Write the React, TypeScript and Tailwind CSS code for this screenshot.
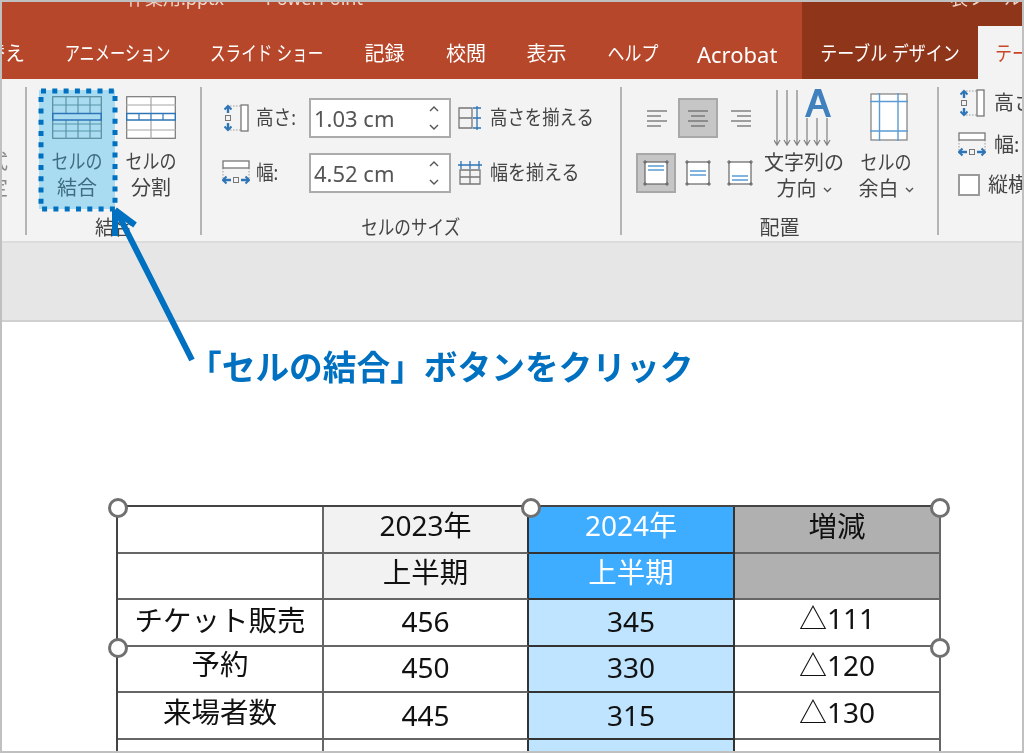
import type { ReactNode } from "react"

const jp = "font-['Noto_Sans','Noto_Sans_CJK_JP',sans-serif]"

const tabs = [
  { label: "アニメーション", w: "w-[145px]", squeeze: "scale-x-[0.76]" },
  { label: "スライド ショー", w: "w-[153px]", squeeze: "scale-x-[0.78]" },
  { label: "記録", w: "w-[83px]", squeeze: "" },
  { label: "校閲", w: "w-[80px]", squeeze: "" },
  { label: "表示", w: "w-[81px]", squeeze: "" },
  { label: "ヘルプ", w: "w-[91px]", squeeze: "scale-x-[0.85]" },
]

function HeightIcon() {
  return (
    <svg width="28" height="28" viewBox="0 0 28 28" fill="none">
      <path d="M8 2h12M8 26h12" stroke="#999" strokeDasharray="1.5 1.5" />
      <rect x="19" y="1" width="7" height="26" fill="#fff" stroke="#777" strokeWidth="1.3" />
      <path d="M6 2v7M6 19v7" stroke="#2e75b6" strokeWidth="2.4" />
      <path d="M2.5 5.5L6 2l3.5 3.5M2.5 22.5L6 26l3.5-3.5" stroke="#2e75b6" strokeWidth="2" />
      <rect x="3.5" y="11.5" width="5" height="5" stroke="#777" />
    </svg>
  )
}

function WidthIcon() {
  return (
    <svg width="28" height="28" viewBox="0 0 28 28" fill="none">
      <path d="M1 9v15M27 9v15" stroke="#999" strokeDasharray="1.5 1.5" />
      <rect x="1" y="2" width="26" height="7" fill="#fff" stroke="#777" strokeWidth="1.3" />
      <path d="M1 21h8M19 21h8" stroke="#2e75b6" strokeWidth="2.4" />
      <path d="M4.5 17.5L1 21l3.5 3.5M23.5 17.5L27 21l-3.5 3.5" stroke="#2e75b6" strokeWidth="2" />
      <rect x="11.5" y="18.5" width="5" height="5" stroke="#777" />
    </svg>
  )
}

function MergeIcon() {
  return (
    <svg width="50" height="43" viewBox="0 0 50 43" fill="none" stroke="#5b95a8" strokeWidth="1.2">
      <rect x="0.7" y="0.7" width="48.6" height="41.6" stroke="#5a8a9c" />
      <path d="M0 9h50M0 28h50M0 35h50M14 0v17M26 0v17M38 0v17M14 24v19M26 24v19M38 24v19" />
      <rect x="0.7" y="17.5" width="48.6" height="6.5" stroke="#2e75b6" strokeWidth="1.5" />
    </svg>
  )
}

function SplitIcon() {
  return (
    <svg width="50" height="43" viewBox="0 0 50 43" fill="#fff" stroke="#a6a6a6" strokeWidth="1.2">
      <rect x="0.7" y="0.7" width="48.6" height="41.6" stroke="#777" />
      <path d="M25 0v17M25 24v19M0 9h50M0 34h50" />
      <rect x="0.7" y="17.5" width="48.6" height="6.5" stroke="#2e75b6" strokeWidth="1.5" />
      <path d="M13 17.5v6.5M25 17.5v6.5M37 17.5v6.5" stroke="#2e75b6" />
    </svg>
  )
}

function EqualHeightIcon() {
  return (
    <svg width="24" height="24" viewBox="0 0 24 24" fill="none">
      <path d="M1 2h13v20H1zM1 12h13" stroke="#777" strokeWidth="1.3" />
      <path d="M19 0v24M15 2h8M15 12h8M15 22h8" stroke="#2e75b6" strokeWidth="1.3" />
    </svg>
  )
}

function EqualWidthIcon() {
  return (
    <svg width="24" height="24" viewBox="0 0 24 24" fill="none">
      <path d="M2 9h20v14H2zM12 9v14M2 16h20" stroke="#777" strokeWidth="1.3" />
      <path d="M0 4h24M3 0v8M12 0v8M21 0v8" stroke="#2e75b6" strokeWidth="1.3" />
    </svg>
  )
}

function AlignLines({ align }: { align: "left" | "center" | "right" }) {
  const rows =
    align === "left"
      ? ["M0 1h20", "M0 6h14", "M0 11h20", "M0 16h14"]
      : align === "center"
        ? ["M0 1h20", "M3 6h14", "M0 11h20", "M3 16h14"]
        : ["M0 1h20", "M6 6h14", "M0 11h20", "M6 16h14"]
  return (
    <svg width="20" height="17" viewBox="0 0 20 17" fill="none" stroke="#666" strokeWidth="1.2">
      {rows.map((d) => (
        <path key={d} d={d} />
      ))}
    </svg>
  )
}

function VAlignIcon({ y }: { y: number }) {
  return (
    <svg width="26" height="26" viewBox="0 0 26 26" fill="none">
      <rect x="2" y="2" width="22" height="22" fill="#fff" stroke="#666" strokeWidth="1.2" />
      <path d="M0 2h4M22 2h4M0 24h4M22 24h4M2 0v4M24 0v4M2 22v4M24 22v4" stroke="#666" />
      <path d={`M5 ${y}h16M5 ${y + 4}h16`} stroke="#5b9bd5" strokeWidth="1.6" />
    </svg>
  )
}

function DirectionIcon() {
  return (
    <svg width="60" height="60" viewBox="0 0 60 60" fill="none">
      <path
        d="M3 3v55M13 3v55M23 3v55M33 31v27M43 31v27M53 31v27M0 53l3 5 3-5M10 53l3 5 3-5M20 53l3 5 3-5M30 53l3 5 3-5M40 53l3 5 3-5M50 53l3 5 3-5"
        stroke="#808080"
        strokeWidth="1.2"
      />
      <path d="M31 30L41 2h6l10 28h-5l-3-8H39l-3 8zM41 18h6.500L44 8z" fill="#3f80bd" fillRule="evenodd" />
    </svg>
  )
}

function MarginIcon() {
  return (
    <svg width="38" height="48" viewBox="0 0 38 48" fill="#fff">
      <rect x="1" y="1" width="36" height="46" stroke="#888" strokeWidth="1.3" />
      <path d="M9.500 0v48M28 0v48M0 8.500h38M0 38h38" stroke="#5b9bd5" strokeWidth="1.4" fill="none" />
    </svg>
  )
}

function Spinner() {
  return (
    <svg width="10" height="26" viewBox="0 0 10 26" fill="none" stroke="#555" strokeWidth="1.4">
      <path d="M1 6l4-4 4 4M1 20l4 4 4-4" />
    </svg>
  )
}

function Chevron() {
  return (
    <svg width="9" height="6" viewBox="0 0 9 6" fill="none" stroke="#555" strokeWidth="1.4" className="inline-block ml-1.5 mb-0.5">
      <path d="M1 1l3.500 3.500L8 1" />
    </svg>
  )
}

function ButtonLabel({ first, second }: { first: ReactNode; second: ReactNode }) {
  return (
    <div className="mt-[3px] text-[20px] leading-[26px] text-center whitespace-nowrap">
      <div>{first}</div>
      <div>{second}</div>
    </div>
  )
}

function SizeRow({ icon, label, value, icon2, label2, squeeze }: { icon: ReactNode; label: string; value: string; icon2: ReactNode; label2: string; squeeze: string }) {
  return (
    <div className="flex items-center h-10">
      <div className="w-[28px] flex justify-center">{icon}</div>
      <span className="w-[59px] pl-[6px] text-[20px] whitespace-nowrap">
        <span className="inline-block origin-left scale-x-[0.88]">{label}</span>
      </span>
      <div className="w-[142px] h-10 bg-white border-2 border-[#ababab] flex items-center justify-between pl-[3px] pr-[10px]">
        <span className="text-[22px] text-[#555]">{value}</span>
        <Spinner />
      </div>
      <div className="ml-[7px] w-[24px]">{icon2}</div>
      <span className="ml-2 text-[20px] whitespace-nowrap">
        <span className={`inline-block origin-left ${squeeze}`}>{label2}</span>
      </span>
    </div>
  )
}

function Group({ className, label, children }: { className: string; label: ReactNode; children: ReactNode }) {
  return (
    <div className={`${className} shrink-0 h-[148px] border-r-2 border-[#b4b4b4] flex flex-col`}>
      <div className="flex-1 min-h-0">{children}</div>
      <div className="text-center text-[20px] leading-[16px] h-[15px] whitespace-nowrap">{label}</div>
    </div>
  )
}

type Cell = { text?: string; bg?: string; color?: string; size?: string; shift?: string }

const gray = "bg-[#f2f2f2]"
const blue = "bg-[#3fadff]"
const pale = "bg-[#bfe4ff]"
const dark = "bg-[#b0b0b0]"
const cjk = "text-[28.5px]"
const num = "text-[28px]"

const rows: Cell[][] = [
  [{}, { text: "2023年", bg: gray, size: num, shift: "pb-[8px]" }, { text: "2024年", bg: blue, color: "text-white", size: num, shift: "pb-[8px]" }, { text: "増減", bg: dark, size: cjk, shift: "pb-[5px]" }],
  [{}, { text: "上半期", bg: gray, size: cjk, shift: "pb-[7px]" }, { text: "上半期", bg: blue, color: "text-white", size: cjk, shift: "pb-[7px]" }, { bg: dark }],
  [
    { text: "チケット販売", size: cjk, shift: "pb-[4px]" },
    { text: "456", size: num, shift: "pb-[2px]" },
    { text: "345", bg: pale, size: num, shift: "pb-[2px]" },
    { text: "△111", size: num, shift: "pb-[8px]" },
  ],
  [
    { text: "予約", size: cjk, shift: "pb-[10px]" },
    { text: "450", size: num, shift: "pb-[4px]" },
    { text: "330", bg: pale, size: num, shift: "pb-[4px]" },
    { text: "△120", size: num, shift: "pb-[8px]" },
  ],
  [
    { text: "来場者数", size: cjk, shift: "pb-[6px]" },
    { text: "445", size: num, shift: "pb-[2px]" },
    { text: "315", bg: pale, size: num, shift: "pb-[2px]" },
    { text: "△130", size: num, shift: "pb-[8px]" },
  ],
  [{}, {}, { bg: pale }, {}],
]

function Handle({ className }: { className: string }) {
  return <div className={`absolute w-[20px] h-[20px] rounded-full bg-white border-[3px] border-[#707070] ${className}`} />
}

export default function App() {
  return (
    <div className={`${jp} relative w-[1024px] h-[753px] overflow-hidden bg-white text-[#444] blur-[0.35px]`}>
      {/* title bar + tabs */}
      <div className="bg-[#b7472a] h-[79px] flex flex-col text-white">
        <div className="h-[26px] flex">
          <div className="w-[802px] shrink-0 pl-[127px] -mt-[14px] text-[18px] leading-[24px] text-[#f0d5cc] whitespace-nowrap">
            作業用.pptx　-　PowerPoint
          </div>
          <div className="flex-1 bg-[#8f3519] pl-[148px] -mt-[14px] text-[18px] leading-[24px] text-[#f0d5cc] whitespace-nowrap">
            表ツール
          </div>
        </div>
        <div className="flex-1 flex text-[20px]">
          <div className="w-[45px] shrink-0 pt-[13px] overflow-hidden whitespace-nowrap flex justify-end pr-[20px]">替え</div>
          {tabs.map((t) => (
            <div key={t.label} className={`${t.w} shrink-0 pt-[13px] text-center whitespace-nowrap`}>
              <span className={`inline-block ${t.squeeze}`}>{t.label}</span>
            </div>
          ))}
          <div className="w-[124px] shrink-0 pt-[12px] pl-[19px] text-[22px] whitespace-nowrap">Acrobat</div>
          <div className="flex-1 bg-[#8f3519] flex">
            <div className="w-[176px] shrink-0 pt-[13px] text-center whitespace-nowrap">
              <span className="inline-block scale-x-[0.85]">テーブル デザイン</span>
            </div>
            <div className="flex-1 bg-[#f3f3f3] pt-[13px] pl-[17px] text-[#c8462a] whitespace-nowrap overflow-hidden">
              <span className="inline-block origin-left scale-x-[0.85]">テーブル レイアウト</span>
            </div>
          </div>
        </div>
      </div>

      {/* ribbon */}
      <div className="bg-[#f3f3f3] h-[164px] flex pt-2 border-b-2 border-[#dcdcdc]">
        <div className="w-[27px] shrink-0 h-[148px] border-r-2 border-[#b4b4b4] overflow-hidden pt-[62px] text-[20px] leading-[26px] text-[#888]">
          <div className="-ml-[32px] whitespace-nowrap">書式</div>
          <div className="-ml-[32px] whitespace-nowrap">設定</div>
        </div>
        <Group
          className="w-[175px]"
          label={<span className="inline-block scale-x-[0.95]">結合</span>}
        >
          <div className="flex pl-[12px] pt-[3px]">
            <div className="w-[76px] h-[119px] bg-[#a9dcf1] flex flex-col items-center pt-[6px] text-[#3f6d80]">
              <MergeIcon />
              <div className="h-[7px]" />
              <ButtonLabel first={<span className="inline-block scale-x-[0.85]">セルの</span>} second="結合" />
            </div>
            <div className="w-[72px] flex flex-col items-center pt-[6px]">
              <SplitIcon />
              <div className="h-[7px]" />
              <ButtonLabel first={<span className="inline-block scale-x-[0.85]">セルの</span>} second="分割" />
            </div>
          </div>
        </Group>
        <Group className="w-[420px]" label={<span className="inline-block scale-x-[0.83]">セルのサイズ</span>}>
          <div className="pl-[20px] pt-[11px] flex flex-col gap-[15px]">
            <SizeRow icon={<HeightIcon />} label="高さ:" value="1.03 cm" icon2={<EqualHeightIcon />} label2="高さを揃える" squeeze="scale-x-[0.87]" />
            <SizeRow icon={<WidthIcon />} label="幅:" value="4.52 cm" icon2={<EqualWidthIcon />} label2="幅を揃える" squeeze="scale-x-[0.9]" />
          </div>
        </Group>
        <Group className="w-[317px]" label="配置">
          <div className="flex pl-[14px]">
            <div className="w-[128px] flex flex-col gap-[15px] pt-[11px]">
              <div className="flex items-center h-10">
                <div className="w-[42px] flex justify-center"><AlignLines align="left" /></div>
                <div className="w-[40px] h-10 bg-[#c6c6c6] border-2 border-[#a8a8a8] flex items-center justify-center"><AlignLines align="center" /></div>
                <div className="w-[46px] flex justify-center"><AlignLines align="right" /></div>
              </div>
              <div className="flex items-center h-10">
                <div className="w-[40px] h-10 bg-[#c6c6c6] border-2 border-[#a8a8a8] flex items-center justify-center"><VAlignIcon y={6} /></div>
                <div className="w-[44px] flex justify-center"><VAlignIcon y={11} /></div>
                <div className="w-[40px] flex justify-center"><VAlignIcon y={16} /></div>
              </div>
            </div>
            <div className="w-[80px] flex flex-col items-center">
              <DirectionIcon />
              <ButtonLabel first="文字列の" second={<>方向<Chevron /></>} />
            </div>
            <div className="ml-[11px] w-[62px] flex flex-col items-center">
              <div className="h-[60px] pt-[6px] pl-[5px]"><MarginIcon /></div>
              <ButtonLabel first={<span className="inline-block scale-x-[0.85]">セルの</span>} second={<>余白<Chevron /></>} />
            </div>
          </div>
        </Group>
        <div className="pl-[19px] pt-[2px] flex flex-col gap-[14px] text-[20px] whitespace-nowrap">
          <div className="flex items-center gap-[8px] h-[28px]"><HeightIcon />高さ:</div>
          <div className="flex items-center gap-[8px] h-[28px]"><WidthIcon />幅:</div>
          <div className="flex items-center gap-[8px] h-[24px]">
            <div className="w-[22px] h-[22px] bg-white border-2 border-[#9a9a9a]" />
            縦横比
          </div>
        </div>
      </div>

      {/* gray strip above the slide */}
      <div className="h-[79px] bg-[#e6e6e6] border-b-2 border-[#d0d0d0]" />

      {/* slide with table */}
      <div className="relative pl-[116px] pt-[183px]">
        <div className="relative w-[825px] border-t-2 border-l-2 border-[#444] grid grid-cols-[206px_205px_206px_206px] auto-rows-[46.6px] text-[#111]">
          {rows.flat().map((c, i) => (
            <div
              key={i}
              className={`border-r-2 border-b-2 flex items-center justify-center whitespace-nowrap ${i % 4 === 2 || i % 4 === 1 ? "border-r-[#333]" : "border-r-[#666]"} ${i % 4 === 2 ? "border-b-[#333]" : "border-b-[#666]"} ${c.bg ?? ""} ${c.color ?? ""} ${c.size ?? ""} ${c.shift ?? ""}`}
            >
              {c.text}
            </div>
          ))}
          <Handle className="-left-[10px] -top-[9px]" />
          <Handle className="left-[403px] -top-[9px]" />
          <Handle className="-right-[9px] -top-[9px]" />
          <Handle className="-left-[10px] top-[131px]" />
          <Handle className="-right-[9px] top-[131px]" />
        </div>
      </div>

      {/* annotation */}
      <svg className="absolute left-0 top-0 pointer-events-none" width="1024" height="753" fill="none">
        <rect x="41" y="91" width="74" height="118" stroke="#0070c0" strokeWidth="5" strokeDasharray="5 6.3" />
        <path d="M192 360L118 214M115 210l20 15M115 210l0 26" stroke="#0070c0" strokeWidth="6" />
      </svg>
      <div className="absolute left-[188px] top-[342px] text-[33.7px] leading-[50px] font-bold text-[#0070c0] whitespace-nowrap">
        「セルの結合」ボタンをクリック
      </div>

      {/* window frame */}
      <div className="absolute inset-0 border-2 border-[#c0c0c0] pointer-events-none" />
    </div>
  )
}
